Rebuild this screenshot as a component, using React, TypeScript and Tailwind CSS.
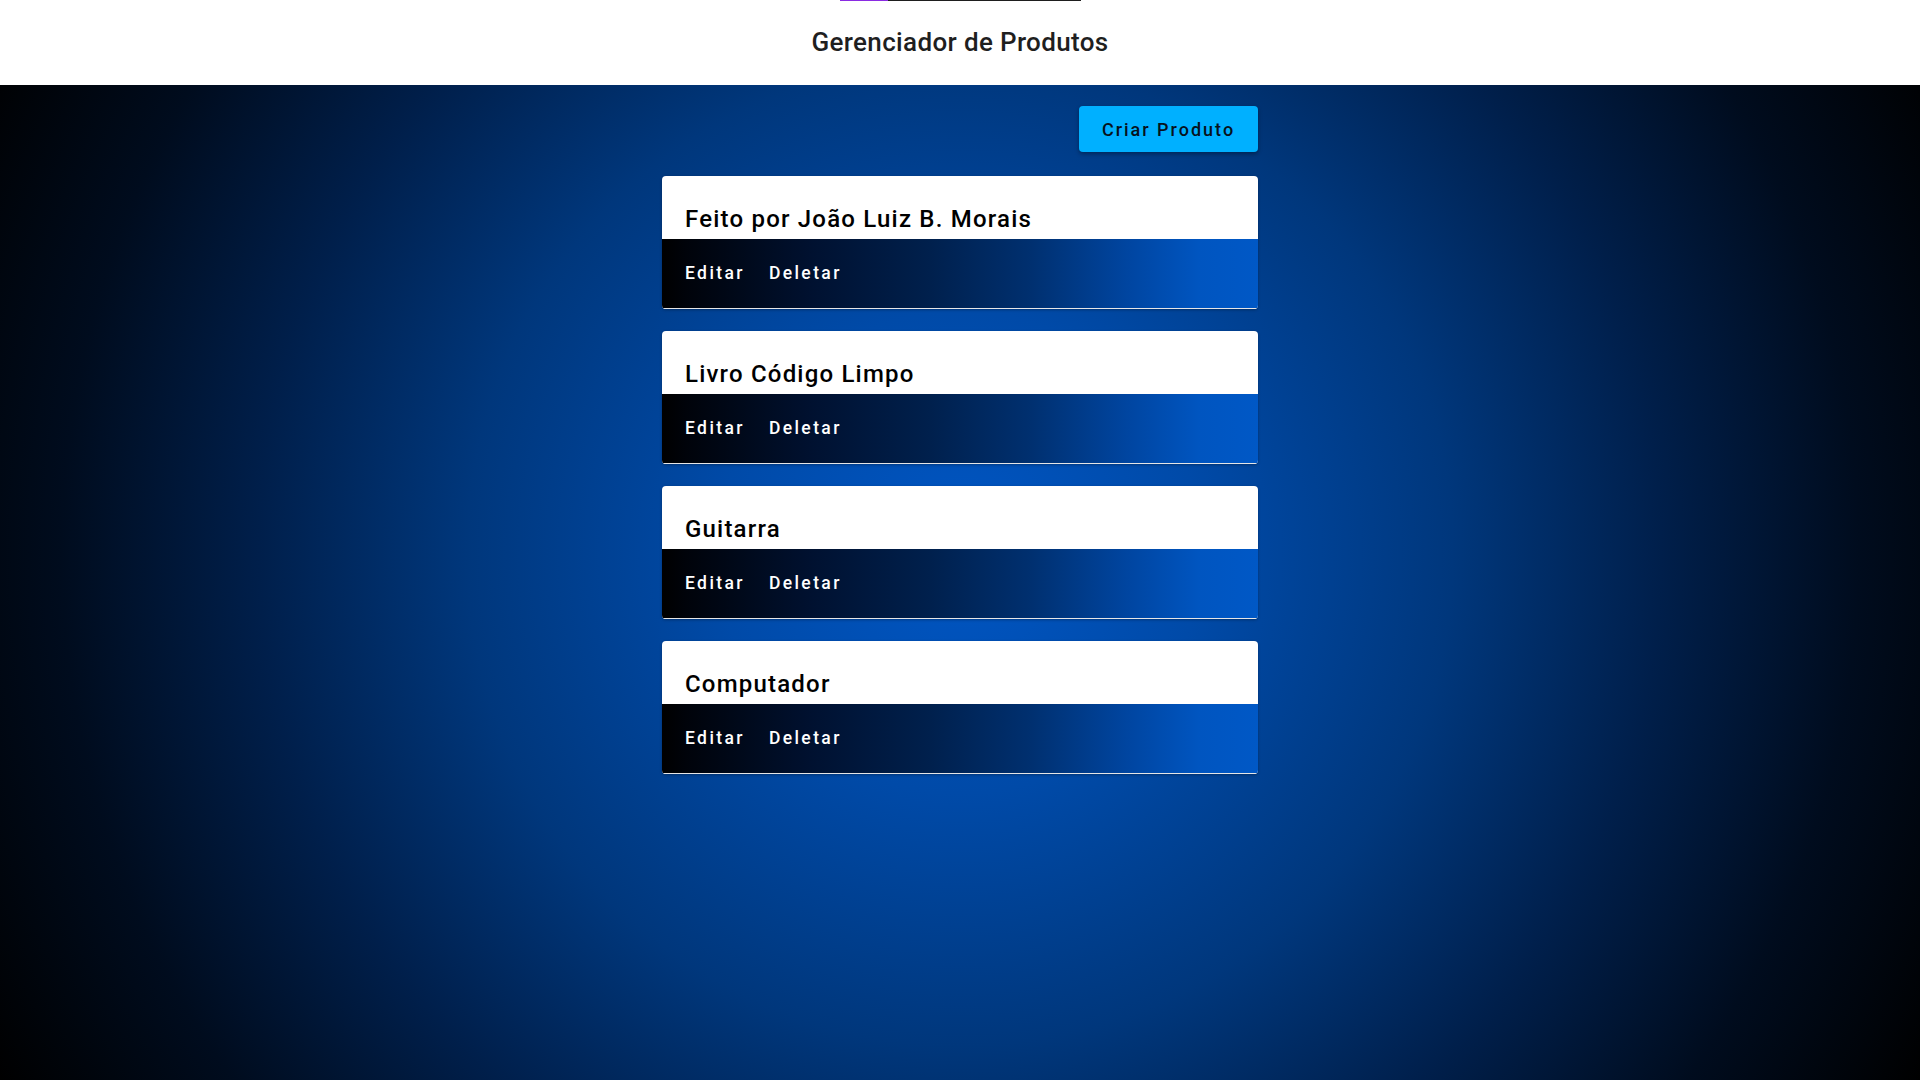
import React from "react";

const produtos = [
  "Feito por João Luiz B. Morais",
  "Livro Código Limpo",
  "Guitarra",
  "Computador",
];

export default function App() {
  return (
    <div
      className="min-h-[1080px] w-full flex flex-col"
      style={{ fontFamily: "Roboto, 'Noto Sans', sans-serif" }}
    >
      <header className="relative h-[85px] bg-white flex items-center justify-center shrink-0">
        <div className="absolute top-0 left-[840px] flex h-px w-[241px]">
          <div className="w-[48px] h-px bg-[#8a2be2]" />
          <div className="flex-1 h-px bg-[#1e1e1e]" />
        </div>
        <h1 className="text-[26px] font-medium tracking-[0.35px] text-[#1f1f1f]">
          Gerenciador de Produtos
        </h1>
      </header>
      <main className="flex-1 min-h-[995px] bg-[radial-gradient(circle_at_50%_47%,#0056c4_0%,#004aa8_22%,#00377c_45%,#001f4b_64%,#000c1e_82%,#000000_100%)] flex flex-col items-center">
        <div className="w-[596px] flex flex-col pt-[21px]">
          <div className="flex justify-end">
            <button className="h-[46px] w-[179px] rounded-[4px] bg-[#00b0ff] text-[#07121c] text-[18px] font-medium tracking-[2px] shadow-[0_2px_4px_rgba(0,0,0,0.35)]">
              Criar Produto
            </button>
          </div>
          <div className="flex flex-col gap-[22px] mt-[24px]">
            {produtos.map((p) => (
              <div
                key={p}
                className="rounded-[4px] overflow-hidden bg-white shadow-[0_1px_3px_rgba(0,0,0,0.3)]"
              >
                <div className="h-[63px] pl-[23px] pt-[27px]">
                  <h2 className="text-[24px] leading-[32px] font-medium tracking-[1.2px] text-black">
                    {p}
                  </h2>
                </div>
                <div className="h-[70px] border-b border-[#e6e6e6] bg-[linear-gradient(90deg,#000000_0%,#00030a_4%,#001130_25%,#00204d_45%,#003070_62%,#0045a0_78%,#0055c0_90%,#0058c6_100%)] flex items-center pl-[23px] gap-[24px]">
                  <button className="text-white text-[17.5px] font-medium tracking-[2.4px]">
                    Editar
                  </button>
                  <button className="text-white text-[17.5px] font-medium tracking-[2.4px]">
                    Deletar
                  </button>
                </div>
              </div>
            ))}
          </div>
        </div>
      </main>
    </div>
  );
}
